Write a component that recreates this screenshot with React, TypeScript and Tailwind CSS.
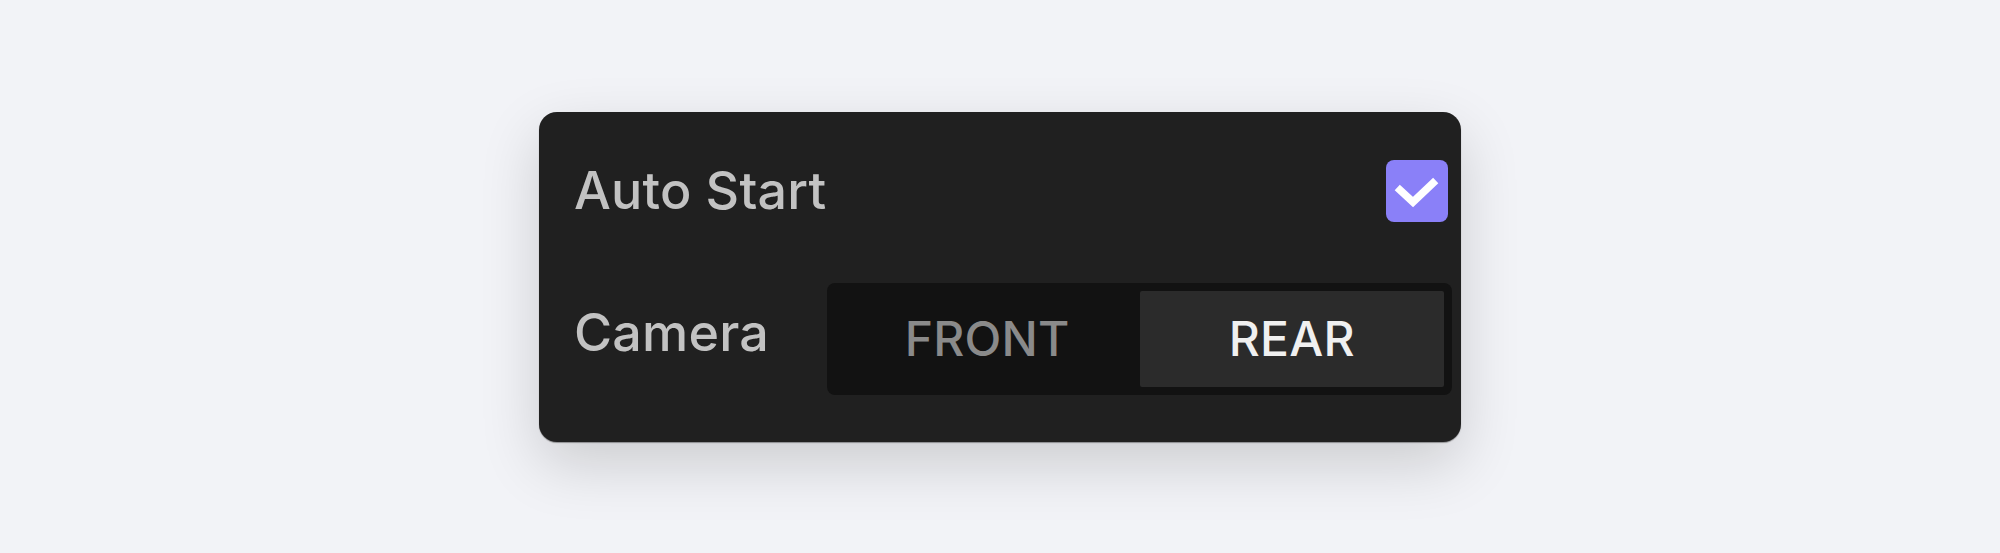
import React, { useState } from 'react';

const App: React.FC = () => {
    const [autoStart, setAutoStart] = useState(true);
    const [camera, setCamera] = useState<'FRONT' | 'REAR'>('REAR');

    return (
        <div className="h-screen w-full bg-[#f2f3f7] flex items-center justify-center font-['Inter',sans-serif]">
            <div className="w-[922px] h-[330px] rounded-[18px] bg-[#202020] pl-[35px] pr-[9px] pt-[48px] pb-[47px] flex flex-col shadow-[0_1px_1px_rgba(0,0,0,0.35),0_22px_60px_rgba(0,0,0,0.16)]">
                {/* Auto start */}
                <div className="flex items-center justify-between h-[62px] pr-[4px]">
                    <span className="text-[52px] leading-none font-medium text-[#c2c2c2] tracking-[0.2px]">Auto Start</span>
                    <button
                        onClick={() => setAutoStart(v => !v)}
                        className={`w-[62px] h-[62px] rounded-[8px] ${autoStart ? 'bg-[#8a80f8]' : 'bg-[#3a3a3a]'}`}
                    >
                        {autoStart && (
                            <svg width="62" height="62" viewBox="0 0 62 62" fill="none">
                                <path d="M14 30 L27 42 L47 23" stroke="white" strokeWidth="7.5" strokeLinecap="square" />
                            </svg>
                        )}
                    </button>
                </div>

                {/* Camera */}
                <div className="flex items-center mt-[61px]">
                    <span className="w-[253px] shrink-0 text-[52px] leading-none font-medium text-[#c2c2c2] mb-[11px] tracking-[0.2px]">Camera</span>
                    <div className="w-[625px] h-[112px] p-[8px] rounded-[8px] bg-[#121212] grid grid-cols-2">
                        {(['FRONT', 'REAR'] as const).map(c => (
                            <button
                                key={c}
                                onClick={() => setCamera(c)}
                                className={`flex items-center justify-center text-[48px] leading-none font-medium tracking-[0.2px] rounded-[2px] ${camera === c ? 'bg-[#2b2b2b] text-[#f0f0f0]' : 'text-[#8a8a8a]'}`}
                            >
                                {c}
                            </button>
                        ))}
                    </div>
                </div>
            </div>
        </div>
    );
};

export default App;
